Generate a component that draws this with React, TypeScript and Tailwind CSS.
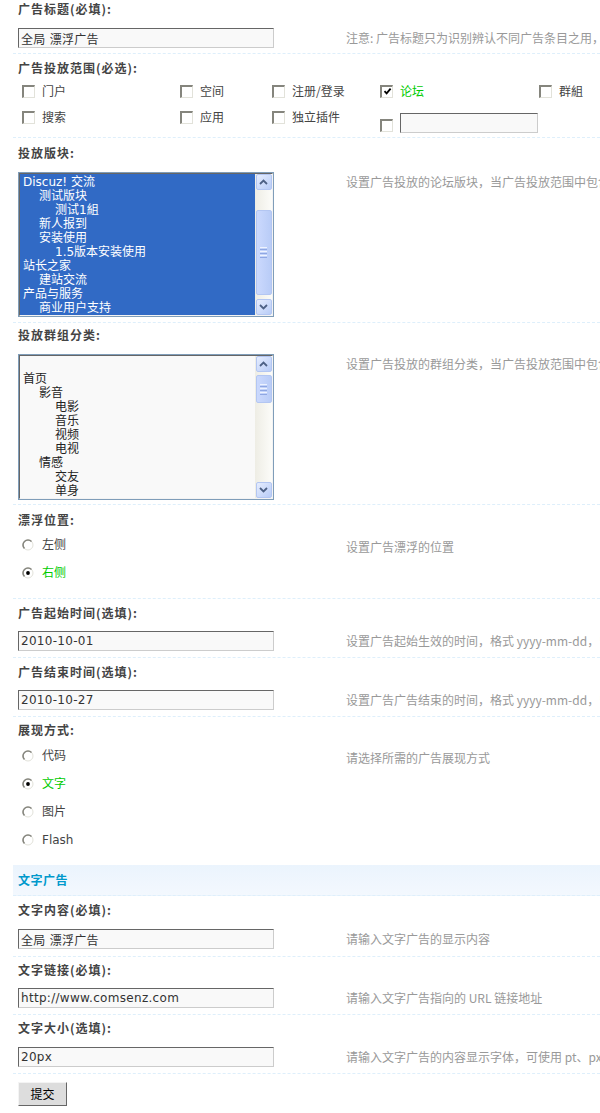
import type { ReactNode } from 'react';

const cjk = "font-['Noto_Sans_CJK_SC',sans-serif]";
const mixed = "font-['DejaVu_Sans','Noto_Sans_CJK_SC',sans-serif]";
const rowLine = 'border-b border-dashed border-[#deeffb]';

function Label({ children }: { children: ReactNode }) {
  return (
    <div className="h-[18px] pl-[5px] text-[12px] font-bold leading-[18px] tracking-[1px] text-[#444]">
      {children}
    </div>
  );
}

function Desc({ children, className = '' }: { children: ReactNode; className?: string }) {
  return (
    <div className={`whitespace-nowrap text-[12px] leading-[20px] text-[#999] ${className}`}>
      {children}
    </div>
  );
}

function TextInput({ value, className = 'w-[256px]' }: { value: string; className?: string }) {
  return (
    <input
      readOnly
      defaultValue={value}
      className={`${mixed} block h-[20px] border border-t-[#666] border-l-[#666] border-r-[#ccc] border-b-[#ccc] bg-[#f9f9f9] px-[2px] text-[12px] leading-[18px] tracking-[0.3px] text-[#333] outline-none ${className}`}
    />
  );
}

function CheckBox({ checked = false, className = '' }: { checked?: boolean; className?: string }) {
  return (
    <span
      className={`flex h-[13px] w-[13px] shrink-0 items-center justify-center border-t-2 border-l-2 border-r border-b border-t-[#85857d] border-l-[#85857d] border-r-[#e2e2da] border-b-[#e2e2da] bg-white ${className}`}
    >
      {checked && (
        <svg width="9" height="9" viewBox="0 0 9 9">
          <path d="M1.5 4.2 L3.6 6.4 L7.6 1.6" fill="none" stroke="#000" strokeWidth="1.8" />
        </svg>
      )}
    </span>
  );
}

function Radio({ checked = false }: { checked?: boolean }) {
  return (
    <svg width="12" height="12" viewBox="0 0 12 12" className="shrink-0">
      <circle cx="6" cy="6" r="5" fill="#fff" stroke="#e2e2da" strokeWidth="1" />
      <path d="M2.46 9.54 A5 5 0 0 1 9.54 2.46" fill="none" stroke="#86867e" strokeWidth="1.6" />
      {checked && <circle cx="6" cy="6" r="1.9" fill="#000" />}
    </svg>
  );
}

function ScopeItem({
  label,
  checked = false,
  className,
}: {
  label: string;
  checked?: boolean;
  className: string;
}) {
  return (
    <div className={`flex h-[18px] shrink-0 items-center gap-[7px] ${className}`}>
      <CheckBox checked={checked} />
      <span className={`text-[12px] leading-[18px] ${checked ? 'text-[#00cc00]' : 'text-[#444]'}`}>
        {label}
      </span>
    </div>
  );
}

function RadioRow({ label, checked = false }: { label: string; checked?: boolean }) {
  return (
    <div className="flex h-[28px] items-center gap-[8px] pl-[4px]">
      <Radio checked={checked} />
      <span className={`${mixed} text-[12px] leading-[18px] ${checked ? 'text-[#00cc00]' : 'text-[#444]'}`}>
        {label}
      </span>
    </div>
  );
}

function ScrollButton({ up }: { up: boolean }) {
  return (
    <div className="flex h-[16px] w-[16px] shrink-0 items-center justify-center rounded-[2px] border border-[#b3c6f2] bg-linear-to-br from-[#e6edfe] to-[#b8ccf7]">
      <svg width="9" height="6" viewBox="0 0 9 6">
        <path
          d={up ? 'M1 5 L4.5 1.6 L8 5' : 'M1 1 L4.5 4.4 L8 1'}
          fill="none"
          stroke="#4d6185"
          strokeWidth="1.8"
        />
      </svg>
    </div>
  );
}

function ScrollBar({ thumbClass }: { thumbClass: string }) {
  return (
    <div className="flex w-[17px] shrink-0 flex-col items-center bg-linear-to-r from-[#eeede5] to-[#fcfcf9]">
      <ScrollButton up />
      <div className="w-full flex-1">
        <div
          className={`mx-auto flex w-[16px] flex-col items-center justify-center gap-[1px] rounded-[2px] border border-[#b3c6f2] bg-linear-to-r from-[#cbd9fd] to-[#b9ccf7] ${thumbClass}`}
        >
          <span className="h-[1px] w-[7px] bg-[#eef3fe]" />
          <span className="h-[1px] w-[7px] bg-[#8fa7e2]" />
          <span className="h-[1px] w-[7px] bg-[#eef3fe]" />
          <span className="h-[1px] w-[7px] bg-[#8fa7e2]" />
          <span className="h-[1px] w-[7px] bg-[#eef3fe]" />
          <span className="h-[1px] w-[7px] bg-[#8fa7e2]" />
        </div>
      </div>
      <ScrollButton up={false} />
    </div>
  );
}

type Option = [string, number];

const indent = ['pl-[3px]', 'pl-[19px]', 'pl-[35px]'];

function ListBox({
  options,
  selected,
  className,
  padClass,
  thumbClass,
}: {
  options: Option[];
  selected: boolean;
  className: string;
  padClass: string;
  thumbClass: string;
}) {
  return (
    <div className={`w-[256px] border border-[#7f9db9] ${className}`}>
      <div className="flex h-full border border-t-[#666] border-l-[#666] border-r-[#f3f3f3] border-b-[#f3f3f3]">
        <div
          className={`${mixed} flex-1 overflow-hidden ${padClass} ${
            selected ? 'bg-[#316ac5] text-white' : 'bg-[#f9f9f9] text-[#222]'
          }`}
        >
          {options.map(([text, level], i) => (
            <div key={i} className={`h-[14px] whitespace-nowrap text-[12px] leading-[14px] ${indent[level]}`}>
              {text}
            </div>
          ))}
        </div>
        <ScrollBar thumbClass={thumbClass} />
      </div>
    </div>
  );
}

const forums: Option[] = [
  ['Discuz! 交流', 0],
  ['测试版块', 1],
  ['测试1組', 2],
  ['新人报到', 1],
  ['安装使用', 1],
  ['1.5版本安装使用', 2],
  ['站长之家', 0],
  ['建站交流', 1],
  ['产品与服务', 0],
  ['商业用户支持', 1],
];

const groups: Option[] = [
  ['', 0],
  ['首页', 0],
  ['影音', 1],
  ['电影', 2],
  ['音乐', 2],
  ['视频', 2],
  ['电视', 2],
  ['情感', 1],
  ['交友', 2],
  ['单身', 2],
];

export default function App() {
  return (
    <div className={`${cjk} h-[1113px] w-[600px] overflow-hidden bg-white text-[12px]`}>
      <div className="pl-[13px]">
        {/* title */}
        <section className={`${rowLine} pb-[5px]`}>
          <Label>广告标题(必填):</Label>
          <div className="mt-[10px] flex pl-[5px]">
            <div className="w-[328px] shrink-0">
              <TextInput value="全局 漂浮广告" />
            </div>
            <Desc>注意: 广告标题只为识别辨认不同广告条目之用，并不在广告中显示</Desc>
          </div>
        </section>

        {/* scope */}
        <section className={`${rowLine} pt-[5px] pb-[3px]`}>
          <Label>广告投放范围(必选):</Label>
          <div className="mt-[1px] pl-[9px]">
            <div className="flex h-[26px] items-center">
              <ScopeItem label="门户" className="w-[158px]" />
              <ScopeItem label="空间" className="w-[92px]" />
              <ScopeItem label="注册/登录" className="w-[108px]" />
              <ScopeItem label="论坛" checked className="w-[159px]" />
              <ScopeItem label="群組" className="w-[50px]" />
            </div>
            <div className="flex h-[30px] items-start">
              <ScopeItem label="搜索" className="mt-[4px] w-[158px]" />
              <ScopeItem label="应用" className="mt-[4px] w-[92px]" />
              <ScopeItem label="独立插件" className="mt-[4px] w-[108px]" />
              <div className="mt-[9px] flex w-[159px] shrink-0 items-end gap-[7px]">
                <CheckBox className="mb-[1px]" />
                <TextInput value="" className="w-[138px]" />
              </div>
            </div>
          </div>
        </section>

        {/* forums */}
        <section className={`${rowLine} pt-[6px] pb-[5px]`}>
          <Label>投放版块:</Label>
          <div className="mt-[10px] flex pl-[5px]">
            <div className="w-[328px] shrink-0">
              <ListBox
                options={forums}
                selected
                className="h-[145px]"
                padClass="pt-[1px]"
                thumbClass="mt-[20px] h-[85px]"
              />
            </div>
            <Desc>设置广告投放的论坛版块，当广告投放范围中包含“论坛”时有效</Desc>
          </div>
        </section>

        {/* groups */}
        <section className={`${rowLine} pt-[3px] pb-[4px]`}>
          <Label>投放群组分类:</Label>
          <div className="mt-[10px] flex pl-[5px]">
            <div className="w-[328px] shrink-0">
              <ListBox
                options={groups}
                selected={false}
                className="h-[146px]"
                padClass="pt-[2px]"
                thumbClass="mt-[3px] h-[28px]"
              />
            </div>
            <Desc>设置广告投放的群组分类，当广告投放范围中包含“群组”时有效</Desc>
          </div>
        </section>

        {/* float position */}
        <section className={`${rowLine} pt-[6px] pb-[11px]`}>
          <Label>漂浮位置:</Label>
          <div className="mt-[2px] flex pl-[5px]">
            <div className="w-[328px] shrink-0">
              <RadioRow label="左侧" />
              <RadioRow label="右侧" checked />
            </div>
            <Desc className="mt-[6px]">设置广告漂浮的位置</Desc>
          </div>
        </section>

        {/* start time */}
        <section className={`${rowLine} pt-[5px] pb-[6px]`}>
          <Label>广告起始时间(选填):</Label>
          <div className="mt-[9px] flex pl-[5px]">
            <div className="w-[328px] shrink-0">
              <TextInput value="2010-10-01" />
            </div>
            <Desc>设置广告起始生效的时间，格式 yyyy-mm-dd，留空为不限制起始时间</Desc>
          </div>
        </section>

        {/* end time */}
        <section className={`${rowLine} pt-[5px] pb-[6px]`}>
          <Label>广告结束时间(选填):</Label>
          <div className="mt-[9px] flex pl-[5px]">
            <div className="w-[328px] shrink-0">
              <TextInput value="2010-10-27" />
            </div>
            <Desc>设置广告广告结束的时间，格式 yyyy-mm-dd，留空为不限制结束时间</Desc>
          </div>
        </section>

        {/* style */}
        <section className="pt-[4px] pb-[11px]">
          <Label>展现方式:</Label>
          <div className="mt-[3px] flex pl-[5px]">
            <div className="w-[328px] shrink-0">
              <RadioRow label="代码" />
              <RadioRow label="文字" checked />
              <RadioRow label="图片" />
              <RadioRow label="Flash" />
            </div>
            <Desc className="mt-[6px]">请选择所需的广告展现方式</Desc>
          </div>
        </section>

        <div className={`${rowLine} h-[31px] bg-linear-to-b from-[#ebf4fd] to-[#f3f8fe] pl-[5px] text-[12px] font-bold leading-[30px] tracking-[0.5px] text-[#0099cc]`}>
          文字广告
        </div>

        <section className={`${rowLine} pt-[5px] pb-[7px]`}>
          <Label>文字内容(必填):</Label>
          <div className="mt-[10px] flex pl-[5px]">
            <div className="w-[328px] shrink-0">
              <TextInput value="全局 漂浮广告" />
            </div>
            <Desc>请输入文字广告的显示内容</Desc>
          </div>
        </section>

        <section className={`${rowLine} pt-[4px] pb-[6px]`}>
          <Label>文字链接(必填):</Label>
          <div className="mt-[9px] flex pl-[5px]">
            <div className="w-[328px] shrink-0">
              <TextInput value="http://www.comsenz.com" />
            </div>
            <Desc>请输入文字广告指向的 URL 链接地址</Desc>
          </div>
        </section>

        <section className={`${rowLine} pt-[4px] pb-[6px]`}>
          <Label>文字大小(选填):</Label>
          <div className="mt-[10px] flex pl-[5px]">
            <div className="w-[328px] shrink-0">
              <TextInput value="20px" />
            </div>
            <Desc>请输入文字广告的内容显示字体，可使用 pt、px、em 为单位</Desc>
          </div>
        </section>

        <div className="pt-[8px] pl-[5px]">
          <button
            type="button"
            className="h-[24px] w-[49px] border border-t-[#f4f4f4] border-l-[#f4f4f4] border-r-[#666] border-b-[#666] bg-[#ddd] text-[12px] leading-[20px] text-black"
          >
            提交
          </button>
        </div>
      </div>
    </div>
  );
}
